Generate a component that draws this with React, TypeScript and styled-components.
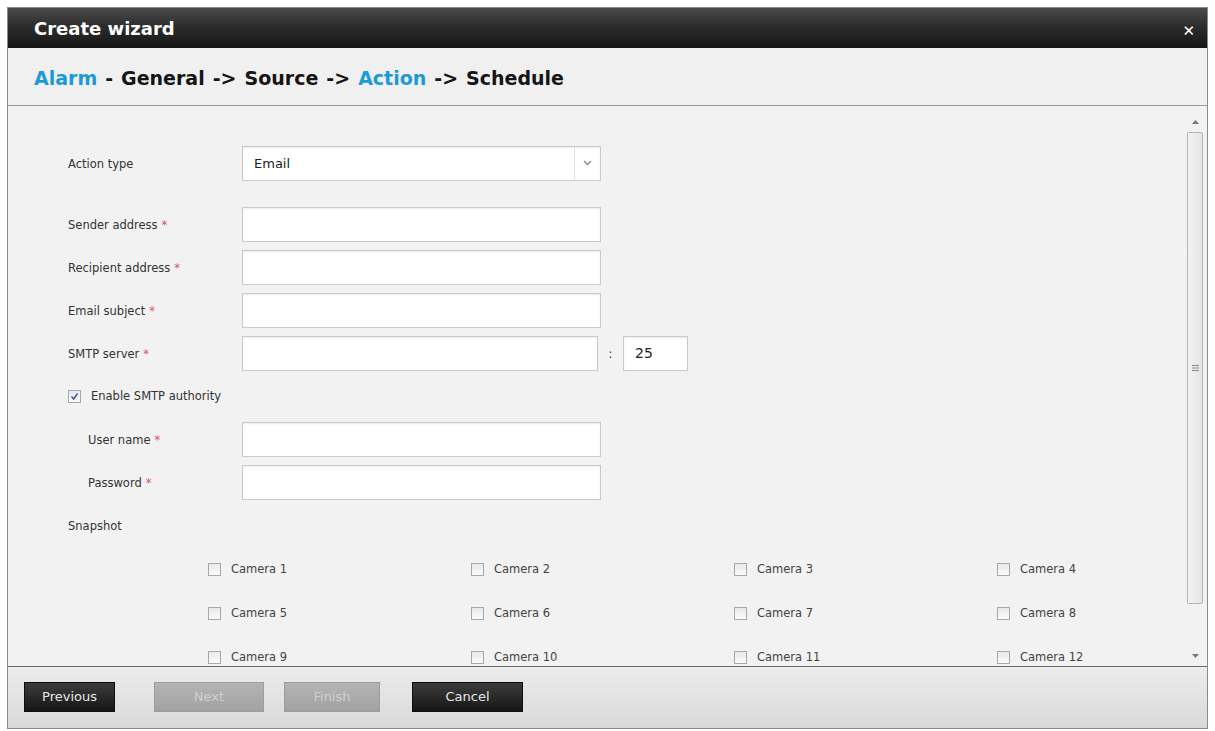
import React from 'react';
import styled, { createGlobalStyle } from 'styled-components';

const GlobalStyle = createGlobalStyle`
  html, body {
    margin: 0;
    padding: 0;
    background: #ffffff;
  }
  * {
    box-sizing: border-box;
  }
`;

const Page = styled.div`
  width: 1215px;
  height: 731px;
  padding: 7px 7px 2px 7px;
  background: #ffffff;
`;

const Dialog = styled.div`
  display: flex;
  flex-direction: column;
  width: 1201px;
  height: 722px;
  border: 1px solid #8a8a8a;
  background: #f1f1f1;
  font-family: 'DejaVu Sans', 'Liberation Sans', sans-serif;
`;

const TitleBar = styled.div`
  display: flex;
  align-items: center;
  justify-content: space-between;
  height: 40px;
  padding: 0 12px 0 26px;
  background: linear-gradient(#4a4a4a 0%, #2d2d2d 45%, #161616 100%);
  color: #ffffff;
  font-weight: bold;
  font-size: 18px;
`;

const CloseIcon = styled.span`
  font-size: 15px;
  line-height: 1;
  margin-top: 6px;
`;

const Breadcrumb = styled.div`
  display: flex;
  align-items: center;
  gap: 8px;
  height: 58px;
  padding: 2px 0 0 26px;
  border-bottom: 1px solid #9a9a9a;
  background: #f0f0f0;
  font-weight: bold;
  font-size: 19px;
  color: #151515;
`;

const Step = styled.span<{ $active?: boolean }>`
  color: ${({ $active }) => ($active ? '#1d9ad6' : '#151515')};
`;

const Body = styled.div`
  display: flex;
  flex: 1;
  min-height: 0;
  background: #f2f2f2;
`;

const Content = styled.div`
  flex: 1;
  overflow: hidden;
  padding: 40px 0 0 60px;
`;

const Form = styled.div<{ $gapAfter?: number }>`
  display: grid;
  grid-template-columns: 174px auto;
  grid-auto-rows: 34px;
  row-gap: 9px;
  align-items: center;
  margin-bottom: ${({ $gapAfter }) => $gapAfter ?? 0}px;
`;

const Label = styled.div<{ $indent?: number }>`
  padding-left: ${({ $indent }) => $indent ?? 0}px;
  padding-top: 2px;
  font-size: 11.5px;
  color: #333;
`;

const Req = styled.span`
  color: #e0506a;
  margin-left: 4px;
`;

const FieldRow = styled.div`
  display: flex;
  align-items: center;
`;

const Input = styled.div<{ $width?: number }>`
  width: ${({ $width }) => $width ?? 359}px;
  height: 35px;
  background: #ffffff;
  border: 1px solid #c9c9c9;
  box-shadow: inset 0 1px 2px rgba(0, 0, 0, 0.08);
  display: flex;
  align-items: center;
  padding-left: 11px;
  font-size: 14px;
  color: #222;
`;

const Select = styled(Input)`
  justify-content: space-between;
  padding-right: 0;
  font-size: 13px;
  align-items: flex-start;
  padding-top: 9px;
`;

const Chevron = styled.div`
  width: 26px;
  height: 33px;
  margin-top: -9px;
  border-left: 1px solid #e2e2e2;
  display: flex;
  align-items: center;
  justify-content: center;
`;

const Colon = styled.span`
  width: 25px;
  text-align: center;
  font-size: 13px;
  color: #444;
`;

const CheckRow = styled.label`
  grid-column: 1 / -1;
  display: flex;
  align-items: center;
  gap: 10px;
  font-size: 11.5px;
  color: #333;
`;

const Box = styled.span`
  width: 13px;
  height: 13px;
  border: 1px solid #a8a8a8;
  background: linear-gradient(#e8e8e8, #fbfbfb);
  display: inline-flex;
  align-items: center;
  justify-content: center;
  flex-shrink: 0;
`;

const CameraGrid = styled.div`
  display: grid;
  grid-template-columns: repeat(4, 263px);
  grid-auto-rows: 34px;
  row-gap: 10px;
  margin: 10px 0 0 140px;
  align-items: center;
`;

const Camera = styled.label`
  display: flex;
  align-items: center;
  gap: 10px;
  font-size: 11.5px;
  color: #444;
`;

const ScrollBar = styled.div`
  width: 18px;
  display: flex;
  flex-direction: column;
  align-items: center;
  padding: 10px 0 4px;
  margin-right: 3px;
`;

const Arrow = styled.div`
  height: 12px;
  display: flex;
  align-items: center;
  justify-content: center;
`;

const Thumb = styled.div`
  width: 16px;
  height: 472px;
  margin-top: 4px;
  border: 1px solid #b5b5b5;
  border-radius: 2px;
  background: linear-gradient(90deg, #f3f3f3, #e4e4e4);
  display: flex;
  align-items: center;
  justify-content: center;
`;

const Track = styled.div`
  flex: 1;
`;

const Footer = styled.div`
  display: flex;
  align-items: center;
  gap: 20px;
  height: 62px;
  padding: 0 0 2px 16px;
  border-top: 1px solid #6a6a6a;
  background: linear-gradient(#ececec, #d9d9d9);
`;

const Button = styled.button<{ $disabled?: boolean; $w: number }>`
  width: ${({ $w }) => $w}px;
  height: 30px;
  border: 1px solid ${({ $disabled }) => ($disabled ? '#9c9c9c' : '#0d0d0d')};
  background: ${({ $disabled }) =>
    $disabled ? 'linear-gradient(#b4b4b4, #a2a2a2)' : 'linear-gradient(#3c3c3c, #161616)'};
  color: ${({ $disabled }) => ($disabled ? '#cfcfcf' : '#e8e8e8')};
  font-family: 'DejaVu Sans', sans-serif;
  font-size: 13px;
  padding: 0;
`;

const cameras = Array.from({ length: 12 }, (_, i) => `Camera ${i + 1}`);

export default function App() {
  return (
    <>
      <GlobalStyle />
      <Page>
        <Dialog>
          <TitleBar>
            <span>Create wizard</span>
            <CloseIcon>✕</CloseIcon>
          </TitleBar>
          <Breadcrumb>
            <Step $active>Alarm</Step>
            <Step>-</Step>
            <Step>General</Step>
            <Step>-&gt;</Step>
            <Step>Source</Step>
            <Step>-&gt;</Step>
            <Step $active>Action</Step>
            <Step>-&gt;</Step>
            <Step>Schedule</Step>
          </Breadcrumb>
          <Body>
            <Content>
              <Form $gapAfter={27}>
                <Label>Action type</Label>
                <Select>
                  <span>Email</span>
                  <Chevron>
                    <svg width="9" height="6" viewBox="0 0 9 6">
                      <path d="M1 1 L4.5 4.5 L8 1" stroke="#8a8a8a" strokeWidth="1.4" fill="none" />
                    </svg>
                  </Chevron>
                </Select>
              </Form>
              <Form>
                <Label>
                  Sender address<Req>*</Req>
                </Label>
                <Input />
                <Label>
                  Recipient address<Req>*</Req>
                </Label>
                <Input />
                <Label>
                  Email subject<Req>*</Req>
                </Label>
                <Input />
                <Label>
                  SMTP server<Req>*</Req>
                </Label>
                <FieldRow>
                  <Input $width={356} />
                  <Colon>:</Colon>
                  <Input $width={65}>25</Input>
                </FieldRow>
                <CheckRow>
                  <Box>
                    <svg width="9" height="9" viewBox="0 0 9 9">
                      <path d="M1.5 4.5 L3.7 7 L7.5 1.5" stroke="#3a55a0" strokeWidth="1.4" fill="none" />
                    </svg>
                  </Box>
                  Enable SMTP authority
                </CheckRow>
                <Label $indent={20}>
                  User name<Req>*</Req>
                </Label>
                <Input />
                <Label $indent={20}>
                  Password<Req>*</Req>
                </Label>
                <Input />
                <Label $indent={-2}>Snapshot</Label>
                <div />
              </Form>
              <CameraGrid>
                {cameras.map((c) => (
                  <Camera key={c}>
                    <Box />
                    {c}
                  </Camera>
                ))}
              </CameraGrid>
            </Content>
            <ScrollBar>
              <Arrow>
                <svg width="7" height="4" viewBox="0 0 7 4">
                  <path d="M0 4 L3.5 0 L7 4 Z" fill="#777" />
                </svg>
              </Arrow>
              <Thumb>
                <svg width="7" height="6" viewBox="0 0 7 6">
                  <path d="M0 0.5 H7 M0 3 H7 M0 5.5 H7" stroke="#888" strokeWidth="1" />
                </svg>
              </Thumb>
              <Track />
              <Arrow>
                <svg width="7" height="4" viewBox="0 0 7 4">
                  <path d="M0 0 L3.5 4 L7 0 Z" fill="#777" />
                </svg>
              </Arrow>
            </ScrollBar>
          </Body>
          <Footer>
            <Button $w={91}>Previous</Button>
            <Button $w={110} $disabled style={{ marginLeft: 19 }}>
              Next
            </Button>
            <Button $w={96} $disabled>
              Finish
            </Button>
            <Button $w={111} style={{ marginLeft: 12 }}>
              Cancel
            </Button>
          </Footer>
        </Dialog>
      </Page>
    </>
  );
}
